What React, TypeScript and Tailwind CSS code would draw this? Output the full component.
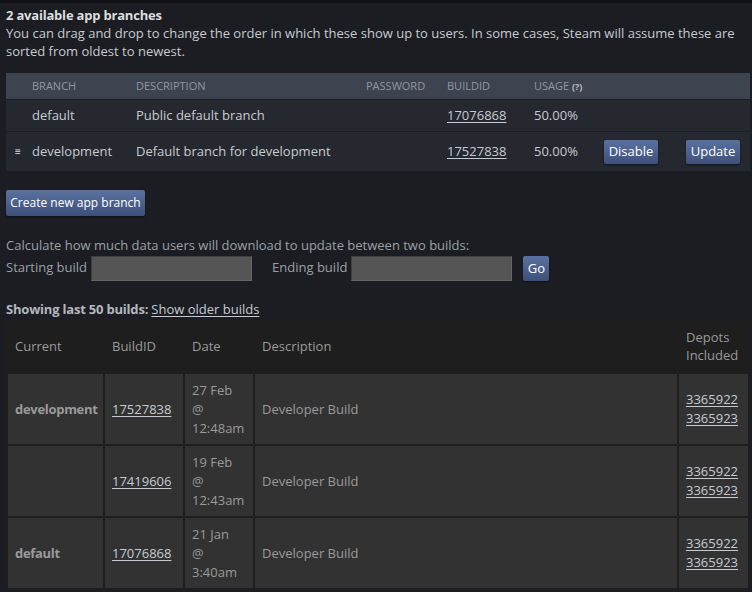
import React from 'react';

type Build = {
    current: string;
    id: string;
    date: [string, string];
    description: string;
    depots: string[];
};

const builds: Build[] = [
    { current: 'development', id: '17527838', date: ['27 Feb', '12:48am'], description: 'Developer Build', depots: ['3365922', '3365923'] },
    { current: '', id: '17419606', date: ['19 Feb', '12:43am'], description: 'Developer Build', depots: ['3365922', '3365923'] },
    { current: 'default', id: '17076868', date: ['21 Jan', '3:40am'], description: 'Developer Build', depots: ['3365922', '3365923'] },
];

const branchCols = 'grid grid-cols-[26px_104px_230px_81px_87px_70px_82px_64px] items-center';

const BlueButton: React.FC<{ children: React.ReactNode; className?: string }> = ({ children, className = '' }) => (
    <button className={`rounded-[2px] bg-gradient-to-b from-[#5a71a0] to-[#3e5079] text-white leading-none shadow-[0_1px_2px_rgba(0,0,0,0.5)] ${className}`}>
        {children}
    </button>
);

export default function App() {
    return (
        <div className="w-[752px] h-[592px] overflow-hidden bg-[#1b1d22] text-[#c6cbd1] font-['Open_Sans',sans-serif] text-[13px]">
            <div className="h-[3px] bg-[#0f1115]" />

            <div className="pl-[6px] pr-[2px]">
                {/* Branches */}
                <div className="pt-[3px] font-bold text-[#dcdedf] leading-[18px] tracking-[-0.2px]">2 available app branches</div>
                <p className="leading-[18px] text-[#c6cbd1]">
                    You can drag and drop to change the order in which these show up to users. In some cases, Steam will assume these are sorted from oldest to newest.
                </p>

                <div className="mt-[13px] bg-[#25282e]">
                    <div className={`${branchCols} h-[26px] bg-[#3e4350] text-[11px] text-[#8f98a0] uppercase`}>
                        <span />
                        <span>Branch</span>
                        <span>Description</span>
                        <span>Password</span>
                        <span>BuildID</span>
                        <span>
                            Usage <span className="text-[9px] font-bold text-[#b8bcc2]">(?)</span>
                        </span>
                        <span />
                        <span />
                    </div>
                    <div className={`${branchCols} h-[32px] border-t border-[#1b1d22]`}>
                        <span />
                        <span>default</span>
                        <span>Public default branch</span>
                        <span />
                        <span className="underline underline-offset-2">17076868</span>
                        <span>50.00%</span>
                        <span />
                        <span />
                    </div>
                    <div className={`${branchCols} h-[40px] border-t border-[#1b1d22]`}>
                        <span className="pl-[9px] text-[10px] text-[#e0e0e0]">≡</span>
                        <span>development</span>
                        <span>Default branch for development</span>
                        <span />
                        <span className="underline underline-offset-2">17527838</span>
                        <span>50.00%</span>
                        <span>
                            <BlueButton className="w-[54px] h-[24px] text-[13px]">Disable</BlueButton>
                        </span>
                        <span>
                            <BlueButton className="w-[54px] h-[24px] text-[13px]">Update</BlueButton>
                        </span>
                    </div>
                </div>

                <BlueButton className="mt-[19px] h-[26px] w-[139px] text-[12px]">Create new app branch</BlueButton>

                {/* Build size calculator */}
                <div className="mt-[20px] leading-[18px] text-[#9ca0a6]">Calculate how much data users will download to update between two builds:</div>
                <div className="flex items-center h-[26px] mt-[1px] text-[#9ca0a6]">
                    <span>Starting build</span>
                    <input className="ml-[4px] w-[161px] h-[25px] bg-[#555555] border border-[#3f3f3f] border-b-[#666] border-r-[#666]" />
                    <span className="ml-[20px]">Ending build</span>
                    <input className="ml-[4px] w-[161px] h-[25px] bg-[#555555] border border-[#3f3f3f] border-b-[#666] border-r-[#666]" />
                    <BlueButton className="ml-[11px] w-[26px] h-[25px] text-[13px]">Go</BlueButton>
                </div>

                <div className="mt-[19px] leading-[18px] text-[#b4b8bd]">
                    <span className="font-bold tracking-[-0.2px]">Showing last 50 builds: </span>
                    <span className="underline underline-offset-2 text-[#c6cbd1]">Show older builds</span>
                </div>

                {/* Builds table */}
                <table className="mt-[2px] w-[744px] table-fixed border-separate border-spacing-[2px] bg-[#1e1e1e] text-[13px] text-[#9a9a9a] leading-[19px]">
                    <thead>
                        <tr className="text-left">
                            <th className="w-[95px] px-[7px] pt-[6px] pb-[8px] font-normal">Current</th>
                            <th className="w-[78px] px-[7px] pt-[6px] pb-[8px] font-normal">BuildID</th>
                            <th className="w-[68px] px-[7px] pt-[6px] pb-[8px] font-normal">Date</th>
                            <th className="w-[422px] px-[7px] pt-[6px] pb-[8px] font-normal">Description</th>
                            <th className="w-[69px] px-[7px] pt-[6px] pb-[8px] font-normal leading-[18px]">Depots Included</th>
                        </tr>
                    </thead>
                    <tbody>
                        {builds.map((b) => (
                            <tr key={b.id} className="bg-[#323232]">
                                <td className="h-[70px] px-[7px] font-bold tracking-[-0.3px]">{b.current}</td>
                                <td className="px-[7px] text-[#c6cbd1] underline underline-offset-2">{b.id}</td>
                                <td className="px-[7px] py-[6px]">
                                    <div>{b.date[0]}</div>
                                    <div>@</div>
                                    <div>{b.date[1]}</div>
                                </td>
                                <td className="px-[7px]">{b.description}</td>
                                <td className="px-[7px] text-[#c6cbd1]">
                                    {b.depots.map((d) => (
                                        <div key={d} className="underline underline-offset-2">{d}</div>
                                    ))}
                                </td>
                            </tr>
                        ))}
                    </tbody>
                </table>
            </div>
        </div>
    );
}
